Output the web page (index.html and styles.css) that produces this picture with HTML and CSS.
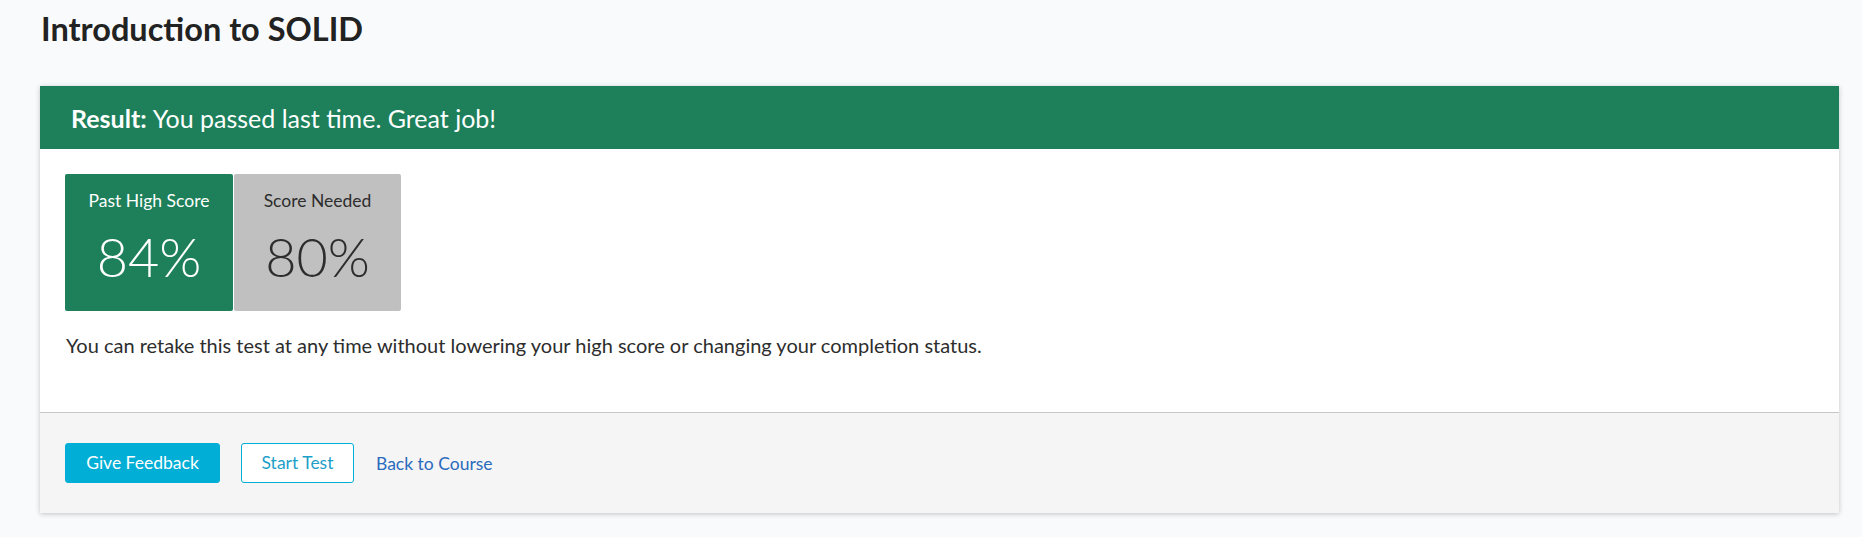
FILE: index.html
```html
<!DOCTYPE html>
<html lang="en">
<head>
<meta charset="utf-8">
<title>Introduction to SOLID</title>
<link rel="stylesheet" href="styles.css">
</head>
<body>
<main class="page">
  <h1 class="title">Introduction to SOLID</h1>
  <section class="card">
    <header class="card-header"><strong>Result:</strong> You passed last time. Great job!</header>
    <div class="card-body">
      <div class="scores">
        <div class="score score-past">
          <div class="score-label">Past High Score</div>
          <div class="score-value">84%</div>
        </div>
        <div class="score score-needed">
          <div class="score-label">Score Needed</div>
          <div class="score-value">80%</div>
        </div>
      </div>
      <p class="note">You can retake this test at any time without lowering your high score or changing your completion status.</p>
    </div>
    <footer class="card-footer">
      <button class="btn btn-primary" type="button">Give Feedback</button>
      <button class="btn btn-outline" type="button">Start Test</button>
      <a class="link" href="#">Back to Course</a>
    </footer>
  </section>
</main>
</body>
</html>
```

FILE: styles.css
```css
html, body {
  margin: 0;
  padding: 0;
  background: #f9fafb;
  font-family: Lato, "Open Sans", "Liberation Sans", sans-serif;
  color: #2d2d2d;
}

.page {
  padding: 9px 23px 24px 40px;
}

.title {
  margin: 0 0 0 1px;
  font-size: 32.5px;
  font-weight: 700;
  line-height: 40px;
  color: #222;
}

.card {
  margin-top: 37px;
  background: #fff;
  box-shadow: 0 1px 5px rgba(0, 0, 0, 0.22);
}

.card-header {
  height: 63px;
  display: flex;
  align-items: center;
  padding-left: 31px;
  background: #1d805a;
  color: #fff;
  font-size: 25px;
}

.card-header strong {
  font-weight: 700;
  margin-right: 6px;
}

.card-body {
  padding: 25px 25px 0 25px;
  height: 238px;
}

.scores {
  display: flex;
  gap: 1px;
}

.score {
  width: 168px;
  height: 137px;
  border-radius: 2px;
  text-align: center;
  box-sizing: border-box;
  padding-top: 16px;
}

.score-past {
  background: #1d805a;
  color: #fff;
}

.score-needed {
  width: 167px;
  background: #c0c0c0;
  color: #2d2d2d;
}

.score-label {
  font-size: 17.5px;
  line-height: 22px;
}

.score-value {
  font-size: 54px;
  font-weight: 300;
  line-height: 70px;
  margin-top: 10px;
}

.note {
  margin: 21px 0 0 1px;
  font-size: 20px;
  line-height: 26px;
}

.card-footer {
  border-top: 1px solid #c8c8c8;
  background: #f5f5f5;
  padding: 30px 25px;
  display: flex;
  align-items: center;
  gap: 21px;
}

.btn {
  height: 40px;
  box-sizing: border-box;
  border-radius: 3px;
  font-family: inherit;
  font-size: 17.5px;
  padding: 0 0 1px;
  cursor: pointer;
}

.btn-primary {
  width: 155px;
  background: #00aed6;
  border: 1px solid #00aed6;
  color: #fff;
}

.btn-outline {
  width: 113px;
  background: #fff;
  border: 1px solid #00aed6;
  color: #1c9fc8;
}

.link {
  margin-left: 1px;
  font-size: 17.5px;
  color: #2b6bbd;
  text-decoration: none;
}
```
